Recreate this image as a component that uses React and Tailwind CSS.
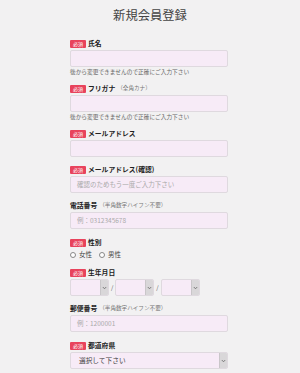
import React from "react";

const font = { fontFamily: '"Noto Sans CJK JP", "Noto Sans", sans-serif' };

function Badge() {
  return (
    <span className="inline-flex items-center justify-center w-[16px] h-[8px] rounded-[1px] bg-[#e8435c] text-white text-[5px] leading-none mr-[2px]">
      必須
    </span>
  );
}

function Label({ req, children, note }) {
  return (
    <div className="flex items-center h-[11px]">
      {req && <Badge />}
      <span className="text-[6.8px] font-bold text-[#222] leading-none">{children}</span>
      {note && <span className="text-[5.6px] text-[#777] leading-none ml-[2px]">{note}</span>}
    </div>
  );
}

function Input({ placeholder }) {
  return (
    <div className="mt-[1px] h-[17px] w-[158px] rounded-[2px] border border-[#dfd9df] bg-[#f7ebf7] flex items-center pl-[6px]">
      {placeholder && <span className="text-[6.5px] text-[#aaa] leading-none">{placeholder}</span>}
    </div>
  );
}

function Helper() {
  return (
    <div className="mt-[1px] h-[7px] text-[5.7px] leading-[7px] text-[#666]">
      後から変更できませんので正確にご入力下さい
    </div>
  );
}

function Arrow() {
  return (
    <div className="h-full w-[8px] bg-[#d9d7d9] border-l border-[#c9c6c9] flex items-center justify-center">
      <svg width="5" height="4" viewBox="0 0 5 4">
        <path d="M0.8 1 L2.5 2.8 L4.2 1" fill="none" stroke="#666" strokeWidth="0.8" />
      </svg>
    </div>
  );
}

function SmallSelect() {
  return (
    <div className="h-[17px] w-[39px] rounded-[2px] border border-[#dfd9df] bg-[#f7ebf7] flex justify-end overflow-hidden">
      <Arrow />
    </div>
  );
}

function Radio({ label }) {
  return (
    <div className="flex items-center mr-[7px]">
      <span className="w-[6px] h-[6px] rounded-full border border-[#888] bg-white mr-[3px]" />
      <span className="text-[6.5px] text-[#444] leading-none">{label}</span>
    </div>
  );
}

export default function App() {
  return (
    <div className="w-[300px] h-[373px] bg-[#f2f1f2] overflow-hidden" style={font}>
      <div className="pt-[8px] h-[38px] text-center text-[12.3px] leading-[15px] text-[#444]">
        新規会員登録
      </div>
      <div className="ml-[70px] w-[158px]">
        <div className="mb-[8px]">
          <Label req>氏名</Label>
          <Input />
          <Helper />
        </div>
        <div className="mb-[8px]">
          <Label req note="（全角カナ）">フリガナ</Label>
          <Input />
          <Helper />
        </div>
        <div className="mb-[7px]">
          <Label req>メールアドレス</Label>
          <Input />
        </div>
        <div className="mb-[7px]">
          <Label req>メールアドレス(確認)</Label>
          <Input placeholder="確認のためもう一度ご入力下さい" />
        </div>
        <div className="mb-[8px]">
          <Label note="（半角数字ハイフン不要）">電話番号</Label>
          <Input placeholder="例：0312345678" />
        </div>
        <div className="mb-[7px]">
          <Label req>性別</Label>
          <div className="mt-[1px] h-[11px] flex items-center">
            <Radio label="女性" />
            <Radio label="男性" />
          </div>
        </div>
        <div className="mb-[7px]">
          <Label req>生年月日</Label>
          <div className="mt-[1px] flex items-center">
            <SmallSelect />
            <span className="text-[6px] text-[#555] mx-[2px] leading-none">/</span>
            <SmallSelect />
            <span className="text-[6px] text-[#555] mx-[2px] leading-none">/</span>
            <SmallSelect />
          </div>
        </div>
        <div className="mb-[8px]">
          <Label note="（半角数字ハイフン不要）">郵便番号</Label>
          <Input placeholder="例：1200001" />
        </div>
        <div>
          <Label req>都道府県</Label>
          <div className="mt-[1px] h-[17px] w-[158px] rounded-[2px] border border-[#dfd9df] bg-[#f7ebf7] flex items-center overflow-hidden">
            <span className="flex-1 pl-[8px] text-[6.7px] text-[#444] leading-none">選択して下さい</span>
            <Arrow />
          </div>
        </div>
      </div>
    </div>
  );
}
